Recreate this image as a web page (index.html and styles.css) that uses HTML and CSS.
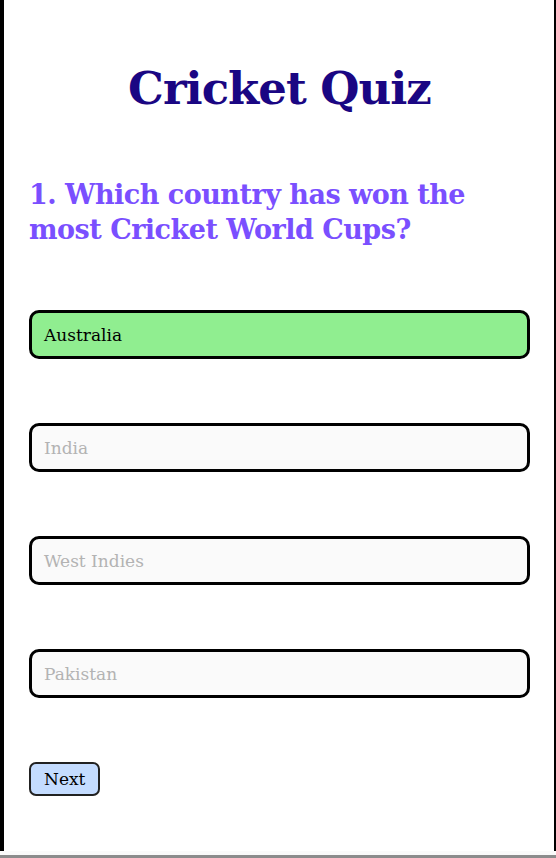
FILE: index.html
```html
<!DOCTYPE html>
<html lang="en">
<head>
<meta charset="utf-8">
<title>Cricket Quiz</title>
<link rel="stylesheet" href="styles.css">
</head>
<body>
<div class="frame">
  <main class="quiz">
    <h1 class="title">Cricket Quiz</h1>
    <h2 class="question">1. Which country has won the most Cricket World Cups?</h2>
    <div class="options">
      <div class="option correct">Australia</div>
      <div class="option">India</div>
      <div class="option">West Indies</div>
      <div class="option">Pakistan</div>
    </div>
    <button class="next">Next</button>
  </main>
  <div class="strip"></div>
  <div class="bar"></div>
</div>
</body>
</html>
```
FILE: styles.css
```css
html, body {
  margin: 0;
  padding: 0;
  background: #fff;
}
.frame {
  width: 556px;
  height: 858px;
  display: flex;
  flex-direction: column;
}
.quiz {
  box-sizing: border-box;
  height: 851px;
  border-left: 4px solid #000;
  border-right: 2px solid #000;
  padding: 0 24px 0 25px;
  font-family: "DejaVu Serif", serif;
}
.strip {
  height: 4px;
  background: #fafafa;
}
.bar {
  height: 3px;
  background: #8c8c8c;
}
.title {
  margin: 59px 0 0;
  text-align: center;
  font-size: 45px;
  line-height: 60px;
  font-weight: bold;
  color: #1a0683;
  letter-spacing: -1px;
}
.question {
  margin: 58px 0 0;
  font-size: 27px;
  line-height: 35px;
  font-weight: bold;
  color: #7a4fff;
  letter-spacing: -0.5px;
}
.options {
  margin-top: 63px;
  display: flex;
  flex-direction: column;
  gap: 64px;
}
.option {
  box-sizing: border-box;
  height: 49px;
  border: 3px solid #000;
  border-radius: 10px;
  background: #fafafa;
  color: #b3b3b3;
  font-size: 17px;
  display: flex;
  align-items: center;
  padding-left: 12px;
}
.option.correct {
  background: #90ee90;
  color: #000;
}
.next {
  margin-top: 64px;
  box-sizing: border-box;
  height: 34px;
  padding: 0 13px;
  border: 2px solid #222;
  border-radius: 7px;
  background: #c4dcff;
  font-family: "DejaVu Serif", serif;
  font-size: 17px;
  color: #000;
}
```
